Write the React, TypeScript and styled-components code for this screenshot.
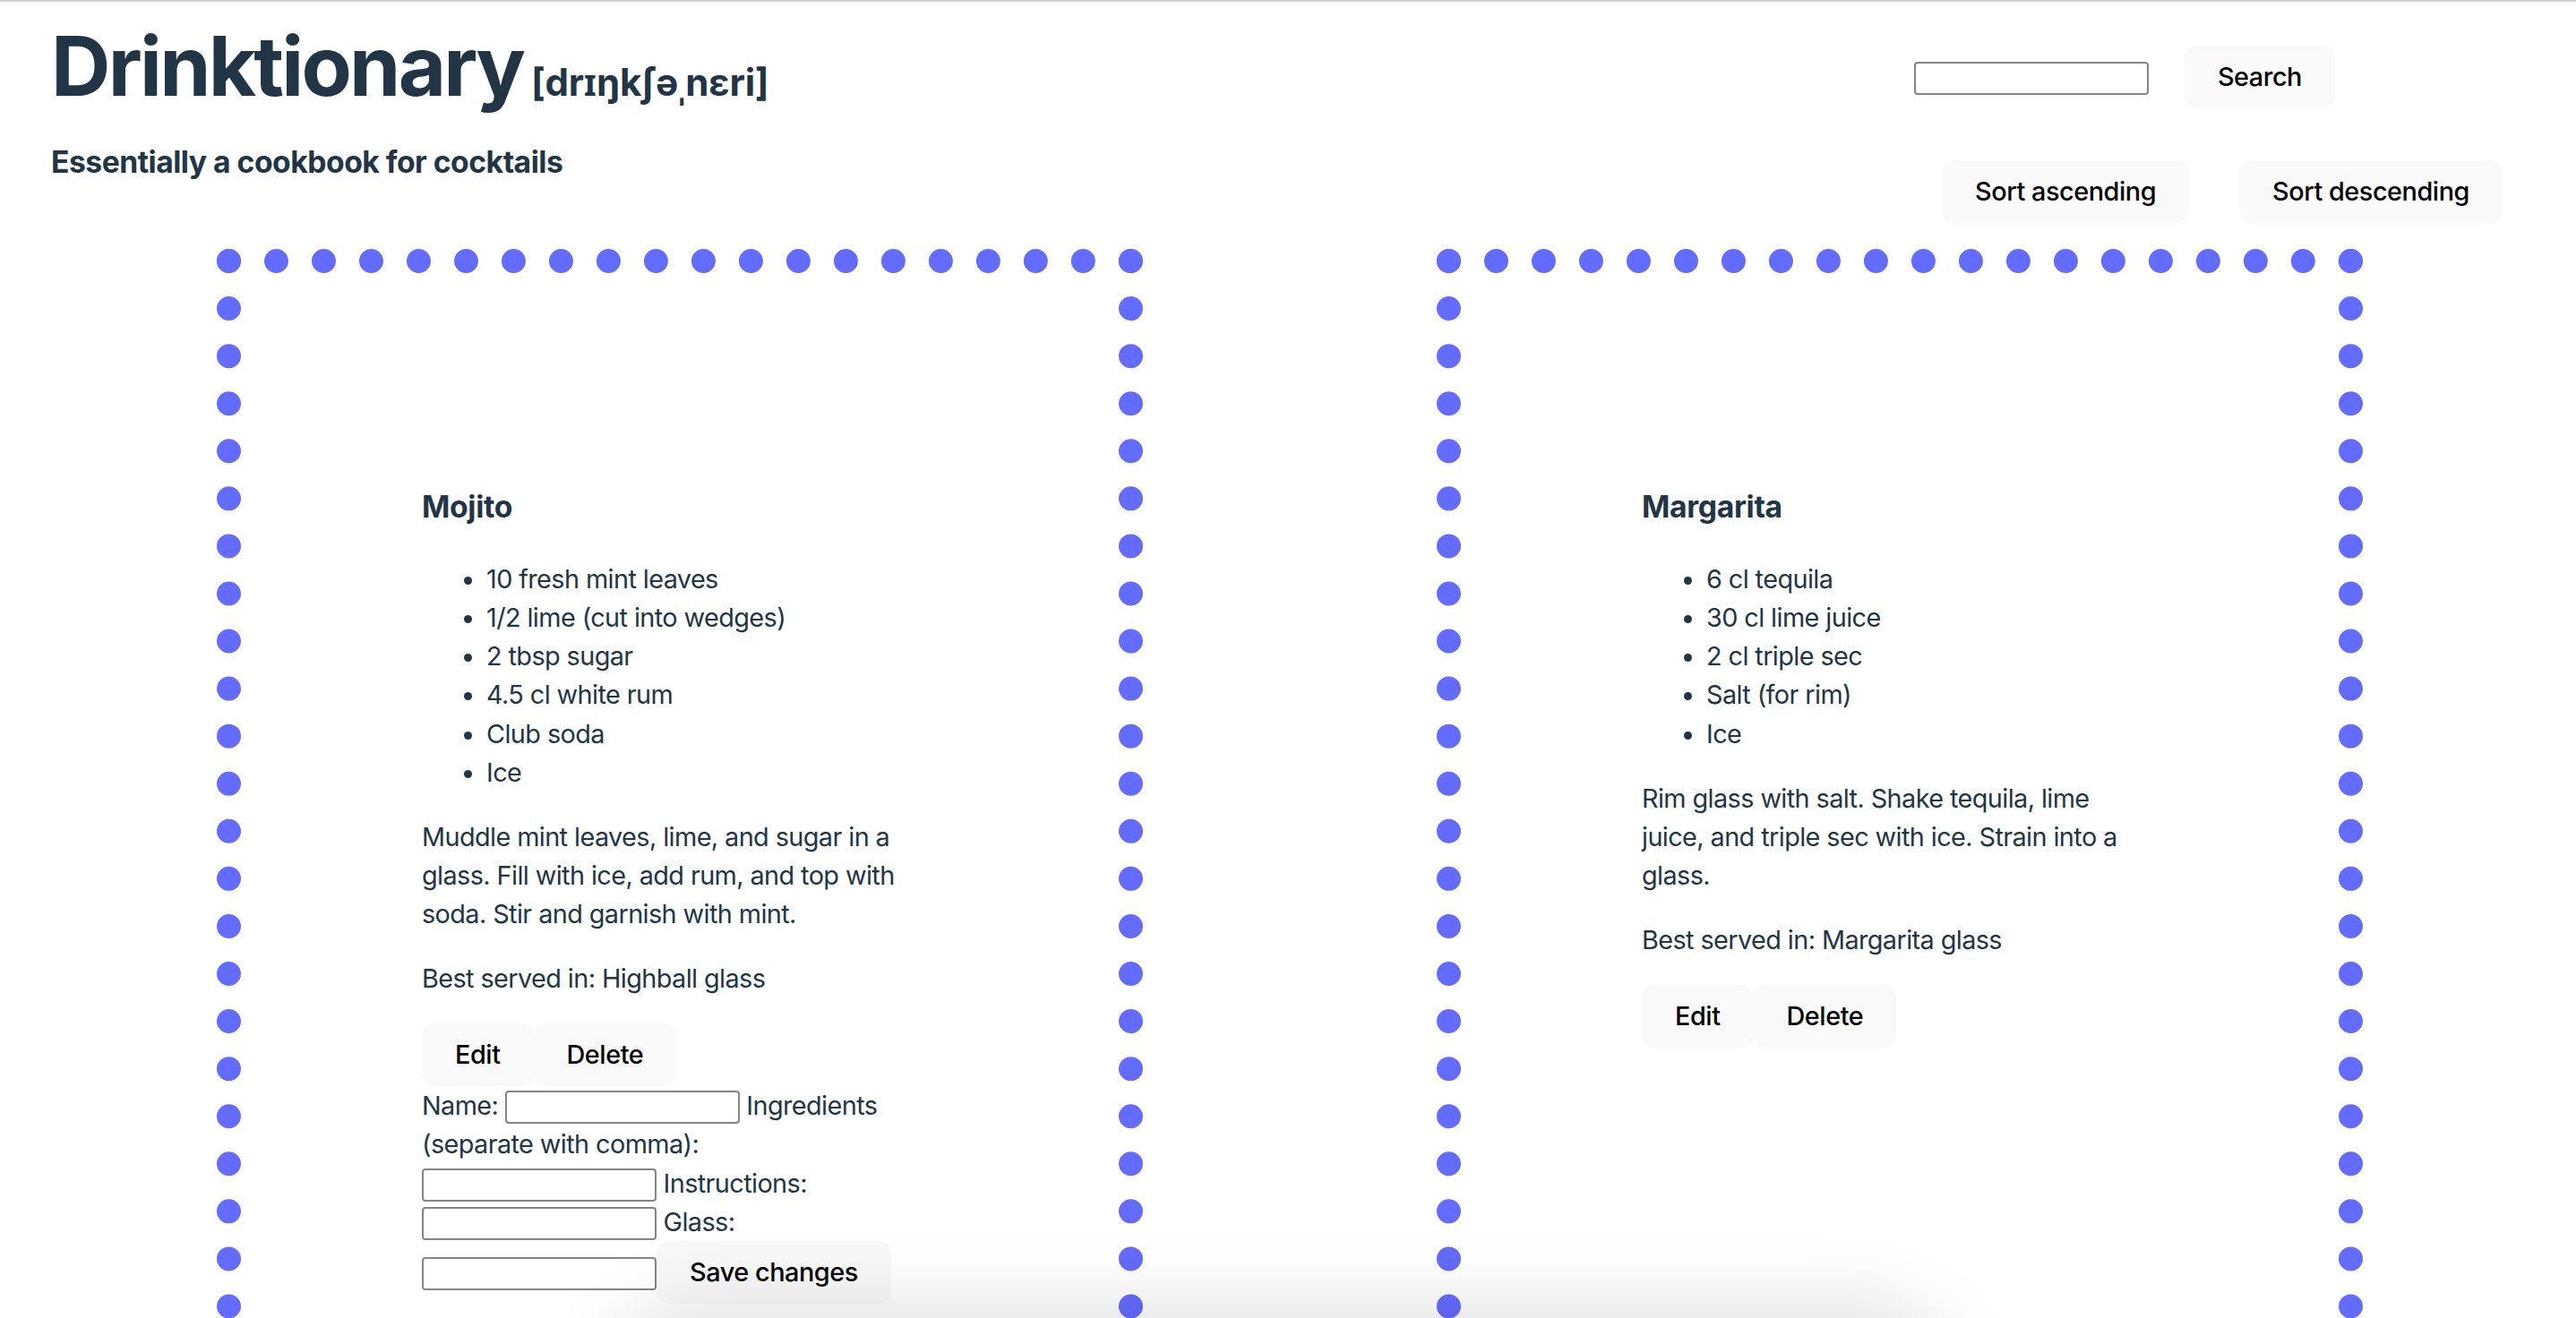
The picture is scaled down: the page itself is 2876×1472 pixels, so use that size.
import React, { useState } from "react";
import styled, { createGlobalStyle } from "styled-components";

const GlobalStyle = createGlobalStyle`
  html, body {
    margin: 0;
    padding: 0;
    background: #ffffff;
  }
  body {
    font-family: Inter, "Noto Sans", sans-serif;
    font-size: 28.8px;
    line-height: 1.5;
    letter-spacing: -0.02em;
    color: #213547;
  }
`;

const TopRule = styled.div`
  height: 2px;
  background: #d3d3d3;
`;

const Header = styled.header`
  display: flex;
  justify-content: space-between;
  align-items: flex-start;
`;

const TitleBlock = styled.div`
  padding: 21px 0 0 57px;
`;

const Title = styled.h1`
  margin: 0;
  font-size: 92px;
  line-height: 1.1;
  font-weight: 700;
  letter-spacing: -0.03em;
`;

const Phonetic = styled.span`
  margin-left: 9px;
  font-size: 42px;
  letter-spacing: -0.005em;
`;

const Subtitle = styled.h3`
  margin: 32px 0 0;
  font-size: 33.7px;
  line-height: 1.5;
  font-weight: 700;
  letter-spacing: -0.015em;
`;

const RightPanel = styled.div`
  display: flex;
  flex-direction: column;
  align-items: flex-end;
  padding: 49px 82px 0 0;
`;

const SearchRow = styled.div`
  display: flex;
  align-items: baseline;
  gap: 40px;
  margin-right: 187px;
`;

const SortRow = styled.div`
  display: flex;
  gap: 56px;
  margin-top: 58px;
`;

const TextInput = styled.input`
  box-sizing: border-box;
  width: 262px;
  height: 37px;
  padding: 2px 4px;
  font-family: Inter, sans-serif;
  font-size: 24px;
  border: 2px solid #858585;
  border-radius: 4px;
  background: #fff;
  vertical-align: baseline;
`;

const Button = styled.button`
  font-family: Inter, sans-serif;
  font-size: 28.8px;
  font-weight: 500;
  letter-spacing: -0.015em;
  line-height: 34px;
  padding: 16px 35px;
  border: 2px solid transparent;
  border-radius: 14px;
  background: #f9f9f9;
  color: #000;
  cursor: pointer;
  transition: border-color 0.25s;
  &:hover {
    border-color: #646cff;
  }
`;

const CardGrid = styled.main`
  display: flex;
  align-items: stretch;
  gap: 328px;
  padding: 29px 0 0 242px;
`;

const Card = styled.section`
  box-sizing: border-box;
  flex: 0 0 1034px;
  border: 27px dotted #646cff;
  padding: 202px;
`;

const CardTitle = styled.h3`
  margin: 33.7px 0;
  font-size: 33.7px;
  line-height: 1.5;
  font-weight: 700;
  letter-spacing: -0.01em;
`;

const Ingredients = styled.ul`
  margin: 28.8px 0;
  padding-left: 72px;
`;

const Para = styled.p`
  margin: 28.8px 0;
`;

const ButtonRow = styled.div`
  display: flex;
`;

const EditForm = styled.form`
  margin: 0;
`;

const BottomShade = styled.div`
  position: fixed;
  left: 720px;
  top: 1500px;
  width: 1420px;
  height: 200px;
  border-radius: 60px;
  background: rgba(0, 0, 0, 0.1);
  box-shadow: 0 0 90px 40px rgba(0, 0, 0, 0.13);
  pointer-events: none;
`;

interface Cocktail {
  name: string;
  ingredients: string[];
  instructions: string;
  glass: string;
}

const cocktails: Cocktail[] = [
  {
    name: "Mojito",
    ingredients: [
      "10 fresh mint leaves",
      "1/2 lime (cut into wedges)",
      "2 tbsp sugar",
      "4.5 cl white rum",
      "Club soda",
      "Ice",
    ],
    instructions:
      "Muddle mint leaves, lime, and sugar in a glass. Fill with ice, add rum, and top with soda. Stir and garnish with mint.",
    glass: "Highball glass",
  },
  {
    name: "Margarita",
    ingredients: [
      "6 cl tequila",
      "30 cl lime juice",
      "2 cl triple sec",
      "Salt (for rim)",
      "Ice",
    ],
    instructions:
      "Rim glass with salt. Shake tequila, lime juice, and triple sec with ice. Strain into a glass.",
    glass: "Margarita glass",
  },
];

const CocktailCard: React.FC<{ drink: Cocktail; editing: boolean }> = ({
  drink,
  editing,
}) => (
  <Card>
    <CardTitle>{drink.name}</CardTitle>
    <Ingredients>
      {drink.ingredients.map((i) => (
        <li key={i}>{i}</li>
      ))}
    </Ingredients>
    <Para>{drink.instructions}</Para>
    <Para>Best served in: {drink.glass}</Para>
    <ButtonRow>
      <Button>Edit</Button>
      <Button>Delete</Button>
    </ButtonRow>
    {editing && (
      <EditForm onSubmit={(e) => e.preventDefault()}>
        <label>
          Name: <TextInput type="text" />
        </label>{" "}
        <label>
          Ingredients (separate with comma): <TextInput type="text" />
        </label>{" "}
        <label>
          Instructions: <TextInput type="text" />
        </label>{" "}
        <label>
          Glass: <TextInput type="text" />
        </label>
        <Button type="submit">Save changes</Button>
      </EditForm>
    )}
  </Card>
);

export default function App() {
  const [query, setQuery] = useState("");

  return (
    <>
      <GlobalStyle />
      <TopRule />
      <Header>
        <TitleBlock>
          <Title>
            Drinktionary<Phonetic>[drɪŋkʃəˌnɛri]</Phonetic>
          </Title>
          <Subtitle>Essentially a cookbook for cocktails</Subtitle>
        </TitleBlock>
        <RightPanel>
          <SearchRow>
            <TextInput
              type="text"
              value={query}
              onChange={(e) => setQuery(e.target.value)}
            />
            <Button>Search</Button>
          </SearchRow>
          <SortRow>
            <Button>Sort ascending</Button>
            <Button>Sort descending</Button>
          </SortRow>
        </RightPanel>
      </Header>
      <CardGrid>
        {cocktails.map((d, idx) => (
          <CocktailCard key={d.name} drink={d} editing={idx === 0} />
        ))}
      </CardGrid>
      <BottomShade />
    </>
  );
}
